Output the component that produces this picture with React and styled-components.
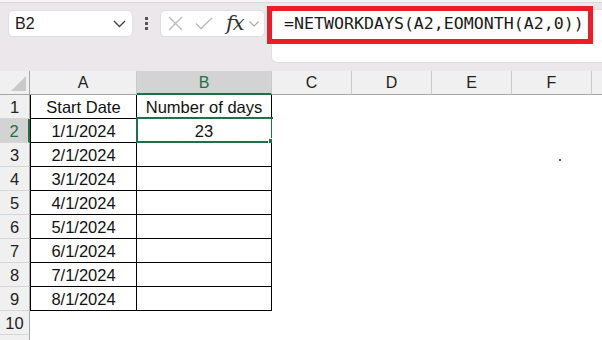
import React from 'react';
import styled, { createGlobalStyle, css } from 'styled-components';

const Global = createGlobalStyle`
  html, body { margin: 0; padding: 0; background: #fff; }
  body { font-family: "Liberation Sans", Arial, sans-serif; overflow: hidden; }
`;

const GREEN = '#1e7145';

const Page = styled.div`
  width: 602px;
  height: 340px;
  overflow: hidden;
  background: #fff;
`;

const Toolbar = styled.div`
  height: 71px;
  box-sizing: border-box;
  background: #ece7ea;
  border-top: 2px solid #f6f3f5;
  box-shadow: inset 0 1px 0 #ddd7db;
  display: flex;
  align-items: flex-start;
  padding: 8px 0 0 8px;
`;

const NameBox = styled.div`
  width: 125px;
  height: 27px;
  box-sizing: border-box;
  background: #fff;
  border: 1px solid #e2dde0;
  border-radius: 5px;
  display: flex;
  align-items: center;
  justify-content: space-between;
  padding: 0 6px 0 6px;
  font-size: 16px;
  color: #1a1a1a;
`;

const DotsBox = styled.div`
  width: 27px;
  height: 27px;
  display: flex;
  flex-direction: column;
  align-items: center;
  justify-content: center;
  gap: 2px;
`;

const Dot = styled.span`
  width: 3px;
  height: 3px;
  background: #555;
`;

const FxBox = styled.div`
  width: 105px;
  height: 27px;
  box-sizing: border-box;
  background: #fff;
  border: 1px solid #e2dde0;
  border-radius: 5px;
  display: flex;
  align-items: center;
  padding-left: 7px;
`;

const IconSlot = styled.span`
  display: flex;
  align-items: center;
  margin-left: ${p => p.$ml || 0}px;
`;

const FxText = styled.span`
  font-family: "DejaVu Serif", "Liberation Serif", serif;
  font-style: italic;
  font-size: 21px;
  color: #333;
  margin-left: 13px;
  line-height: 1;
  letter-spacing: -1px;
`;

const FormulaArea = styled.div`
  flex: 1;
  height: 52px;
  margin-left: 7px;
  background: #fff;
  border-radius: 5px 0 0 5px;
  box-shadow: 0 0 0 1px #e2dde0;
  position: relative;
  box-sizing: border-box;
  padding: 4px 0 0 12px;
`;

const FormulaText = styled.div`
  font-family: "DejaVu Sans Mono", "Liberation Mono", monospace;
  font-size: 16.6px;
  line-height: 20px;
  color: #1a1a1a;
  white-space: nowrap;
`;

const Highlight = styled.div`
  position: absolute;
  left: -5px;
  top: -4px;
  width: 326px;
  height: 38px;
  box-sizing: border-box;
  border: 5px solid #ee1d25;
  pointer-events: none;
`;

const Grid = styled.div`
  display: grid;
  grid-template-columns: 30px 107px 135px 80px 80px 80px 80px 80px;
  grid-auto-rows: 24px;
  width: 672px;
`;

const HeadCell = styled.div`
  box-sizing: border-box;
  background: ${p => (p.$active ? '#d3d3d3' : '#f0f0f0')};
  color: ${p => (p.$active ? GREEN : '#222')};
  border-right: 1px solid #c9c9c9;
  border-bottom: ${p => (p.$active ? `2px solid ${GREEN}` : '1px solid #a6a6a6')};
  display: flex;
  align-items: center;
  justify-content: center;
  font-size: 16px;
  padding-top: ${p => (p.$active ? 1 : 0)}px;
`;

const Corner = styled.div`
  box-sizing: border-box;
  background: #f0f0f0;
  border-right: 1px solid #a6a6a6;
  border-bottom: 1px solid #a6a6a6;
  position: relative;
  &::after {
    content: '';
    position: absolute;
    right: 3px;
    bottom: 3px;
    width: 0;
    height: 0;
    border-left: 15px solid transparent;
    border-bottom: 15px solid #c9c9c9;
  }
`;

const RowHead = styled.div`
  box-sizing: border-box;
  background: ${p => (p.$active ? '#d3d3d3' : '#f0f0f0')};
  color: ${p => (p.$active ? GREEN : '#222')};
  border-right: ${p => (p.$active ? `2px solid ${GREEN}` : '1px solid #a6a6a6')};
  border-bottom: 1px solid #d6d6d6;
  display: flex;
  align-items: center;
  justify-content: center;
  font-size: 16.5px;
  padding-top: 1px;
`;

const Cell = styled.div`
  box-sizing: border-box;
  background: #fff;
  display: flex;
  align-items: center;
  justify-content: center;
  font-size: 16.5px;
  color: #111;
  position: relative;
  padding-top: 1px;
  ${p => p.$boxed && css`
    border-right: 1px solid #000;
    border-bottom: 1px solid #000;
  `}
  ${p => p.$first && css`
    border-left: 1px solid #000;
  `}
`;

const Selection = styled.div`
  position: absolute;
  left: -1px;
  top: -2px;
  right: -2px;
  bottom: -1px;
  border: 2px solid ${GREEN};
  pointer-events: none;
  &::after {
    content: '';
    position: absolute;
    right: -4px;
    bottom: -4px;
    width: 5px;
    height: 5px;
    background: ${GREEN};
    border: 1px solid #fff;
  }
`;

const Speck = styled.span`
  position: absolute;
  left: 47px;
  top: 16px;
  width: 2px;
  height: 2px;
  background: #555;
`;

const data = [
  ['Start Date', 'Number of days'],
  ['1/1/2024', '23'],
  ['2/1/2024', ''],
  ['3/1/2024', ''],
  ['4/1/2024', ''],
  ['5/1/2024', ''],
  ['6/1/2024', ''],
  ['7/1/2024', ''],
  ['8/1/2024', ''],
];

const cols = ['A', 'B', 'C', 'D', 'E', 'F', 'G'];

export default function App() {
  const rows = [];
  for (let r = 1; r <= 11; r++) {
    const rowData = data[r - 1];
    rows.push(
      <RowHead key={`h${r}`} $active={r === 2}>{r <= 10 ? r : ''}</RowHead>
    );
    cols.forEach((c, i) => {
      const boxed = !!rowData && i < 2;
      const text = rowData && i < 2 ? rowData[i] : '';
      rows.push(
        <Cell key={`${c}${r}`} $boxed={boxed} $first={boxed && i === 0}>
          {text}
          {r === 2 && c === 'B' && <Selection />}
          {r === 3 && c === 'F' && <Speck />}
        </Cell>
      );
    });
  }

  return (
    <Page>
      <Global />
      <Toolbar>
        <NameBox>
          <span>B2</span>
          <svg width="13" height="8" viewBox="0 0 13 8">
            <path d="M1 1 L6.5 6.5 L12 1" fill="none" stroke="#444" strokeWidth="1.4" />
          </svg>
        </NameBox>
        <DotsBox>
          <Dot />
          <Dot />
          <Dot />
        </DotsBox>
        <FxBox>
          <IconSlot>
            <svg width="15" height="15" viewBox="0 0 15 15">
              <path d="M1 1 L14 14 M14 1 L1 14" fill="none" stroke="#b8b8b8" strokeWidth="1.3" />
            </svg>
          </IconSlot>
          <IconSlot $ml={12}>
            <svg width="18" height="13" viewBox="0 0 18 13">
              <path d="M1 6.5 L6 11.5 L17 1" fill="none" stroke="#b8b8b8" strokeWidth="1.3" />
            </svg>
          </IconSlot>
          <FxText>fx</FxText>
          <IconSlot $ml={5}>
            <svg width="10" height="6" viewBox="0 0 10 6">
              <path d="M0.5 0.5 L5 5 L9.5 0.5" fill="none" stroke="#aaa" strokeWidth="1.2" />
            </svg>
          </IconSlot>
        </FxBox>
        <FormulaArea>
          <FormulaText>=NETWORKDAYS(A2,EOMONTH(A2,0))</FormulaText>
          <Highlight />
        </FormulaArea>
      </Toolbar>
      <Grid>
        <Corner />
        {cols.map(c => (
          <HeadCell key={c} $active={c === 'B'}>{c === 'G' ? '' : c}</HeadCell>
        ))}
        {rows}
      </Grid>
    </Page>
  );
}
